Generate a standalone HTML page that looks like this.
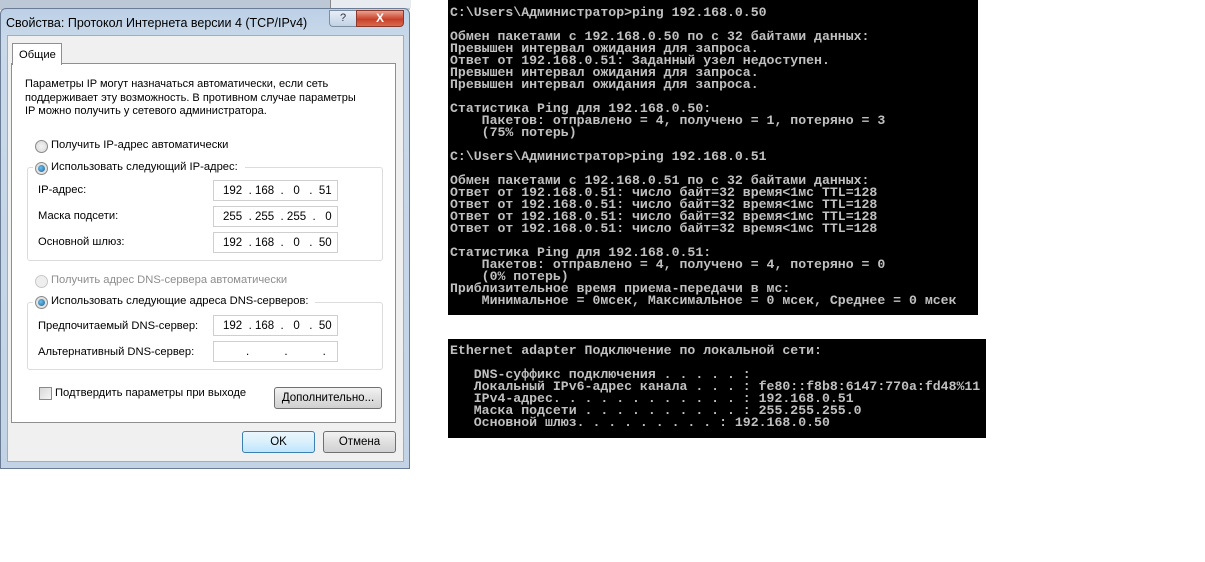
<!DOCTYPE html>
<html><head><meta charset="utf-8"><style>
body{margin:0;width:1205px;height:562px;background:#fff;position:relative;overflow:hidden;font-family:"Liberation Sans",sans-serif;}
.a{position:absolute}
.t{font-size:11.2px;color:#000;white-space:nowrap}
.con{position:absolute;background:#000;color:#c0c0c0;font-family:"Liberation Mono",monospace;font-weight:bold;font-size:13.2px;line-height:12px;white-space:pre;letter-spacing:0}
.inp{position:absolute;left:213px;width:123px;height:19px;background:#fff;border:1px solid #cfcfcf;font-size:11.5px;line-height:19px}
.inp span{position:absolute;top:1px}
.rad{position:absolute;width:11px;height:11px;border-radius:50%;border:1px solid #8a8a8a;background:radial-gradient(#f4f4f4,#d6d6d6)}
.rad.on::after{content:"";position:absolute;left:2px;top:2px;width:7px;height:7px;border-radius:50%;background:radial-gradient(circle at 40% 40%,#6ac2f0,#1a5d93)}
.btn{position:absolute;height:20px;border:1px solid #707070;border-radius:3px;background:linear-gradient(#f2f2f2,#e0e0e0 50%,#d0d0d0);font-size:11.5px;text-align:center;line-height:20px}
.grp{position:absolute;border:1px solid #dcdcdc;border-radius:3px}
</style></head><body>
<div class="a" style="left:0;top:0;width:410px;height:10px;background:#bcc8d6"></div>
<div class="a" style="left:330px;top:0;width:80px;height:8px;background:#e8ecf0;border-left:1px solid #888"></div>
<div class="a" style="left:0;top:8px;width:408px;height:459px;background:linear-gradient(#bcd0e6,#c9d9ea 30px,#c2d3e6);border:1px solid #6a7d94;border-radius:6px 6px 0 0"></div>
<div class="a t" style="left:6px;top:16px;font-size:12.5px">Свойства: Протокол Интернета версии 4 (TCP/IPv4)</div>
<div class="a" style="left:329px;top:10px;width:26px;height:15px;border:1px solid #7d8ea3;border-radius:0 0 0 4px;background:linear-gradient(#e6eef7,#c3d2e4);font-size:11px;text-align:center;line-height:15px;color:#334">?</div>
<div class="a" style="left:356px;top:10px;width:46px;height:15px;border:1px solid #8a3a2c;border-radius:0 0 4px 0;background:linear-gradient(#e8a18f,#c8412a 55%,#d86a4c);color:#fff;font-weight:bold;font-size:12px;text-align:center;line-height:15px">X</div>
<div class="a" style="left:7px;top:35px;width:395px;height:425px;background:#f0f0f0;border:1px solid #a0adbd"></div>
<div class="a" style="left:11px;top:63px;width:383px;height:358px;background:#fff;border:1px solid #8e8f8f"></div>
<div class="a" style="left:12px;top:43px;width:48px;height:21px;background:#fff;border:1px solid #8e8f8f;border-bottom:none"></div>
<div class="a t" style="left:19px;top:49px">Общие</div>
<div class="a t" style="left:25px;top:78px;line-height:13.5px;font-size:11px">Параметры IP могут назначаться автоматически, если сеть<br>поддерживает эту возможность. В противном случае параметры<br>IP можно получить у сетевого администратора.</div>
<div class="rad" style="left:35px;top:140px"></div>
<div class="a t" style="left:51px;top:139px">Получить IP-адрес автоматически</div>
<div class="grp" style="left:27px;top:167px;width:354px;height:92px"></div>
<div class="a" style="left:33px;top:160px;width:212px;height:14px;background:#fff"></div>
<div class="rad on" style="left:35px;top:162px"></div>
<div class="a t" style="left:51px;top:161px">Использовать следующий IP-адрес:</div>
<div class="a t" style="left:38px;top:184px">IP-адрес:</div>
<div class="a t" style="left:38px;top:210px">Маска подсети:</div>
<div class="a t" style="left:38px;top:236px">Основной шлюз:</div>
<div class="inp" style="top:180px"><span style="left:9px">192&nbsp; .&nbsp;168&nbsp; .&nbsp;&nbsp; 0&nbsp;&nbsp; .&nbsp; 51</span></div>
<div class="inp" style="top:206px"><span style="left:9px">255&nbsp; .&nbsp;255&nbsp; .&nbsp;255&nbsp; .&nbsp;&nbsp; 0</span></div>
<div class="inp" style="top:232px"><span style="left:9px">192&nbsp; .&nbsp;168&nbsp; .&nbsp;&nbsp; 0&nbsp;&nbsp; .&nbsp; 50</span></div>
<div class="rad" style="left:35px;top:275px;border-color:#c8c8c8;background:#eee"></div>
<div class="a t" style="left:51px;top:274px;color:#8d8d8d">Получить адрес DNS-сервера автоматически</div>
<div class="grp" style="left:27px;top:302px;width:354px;height:66px"></div>
<div class="a" style="left:33px;top:294px;width:282px;height:14px;background:#fff"></div>
<div class="rad on" style="left:35px;top:296px"></div>
<div class="a t" style="left:51px;top:295px">Использовать следующие адреса DNS-серверов:</div>
<div class="a t" style="left:38px;top:320px">Предпочитаемый DNS-сервер:</div>
<div class="a t" style="left:38px;top:346px">Альтернативный DNS-сервер:</div>
<div class="inp" style="top:315px"><span style="left:9px">192&nbsp; .&nbsp;168&nbsp; .&nbsp;&nbsp; 0&nbsp;&nbsp; .&nbsp; 50</span></div>
<div class="inp" style="top:341px"><span style="left:32px">.&nbsp;&nbsp;&nbsp;&nbsp;&nbsp;&nbsp;&nbsp;&nbsp;&nbsp;&nbsp; .&nbsp;&nbsp;&nbsp;&nbsp;&nbsp;&nbsp;&nbsp;&nbsp;&nbsp;&nbsp; .</span></div>
<div class="a" style="left:39px;top:387px;width:11px;height:11px;border:1px solid #8a8a8a;background:linear-gradient(135deg,#d8d8d8,#f6f6f6)"></div>
<div class="a t" style="left:55px;top:387px">Подтвердить параметры при выходе</div>
<div class="btn" style="left:274px;top:387px;width:106px">Дополнительно...</div>
<div class="btn" style="left:242px;top:431px;width:71px;border-color:#3c7fb1;background:linear-gradient(#eaf6fd,#d9f0fc 50%,#bee6fd)">OK</div>
<div class="btn" style="left:323px;top:431px;width:71px">Отмена</div>

<div class="con" style="left:448px;top:0;width:530px;height:315px;padding:0"><div style="position:absolute;left:2px;top:7px">C:\Users\Администратор&gt;ping 192.168.0.50

Обмен пакетами с 192.168.0.50 по с 32 байтами данных:
Превышен интервал ожидания для запроса.
Ответ от 192.168.0.51: Заданный узел недоступен.
Превышен интервал ожидания для запроса.
Превышен интервал ожидания для запроса.

Статистика Ping для 192.168.0.50:
    Пакетов: отправлено = 4, получено = 1, потеряно = 3
    (75% потерь)

C:\Users\Администратор&gt;ping 192.168.0.51

Обмен пакетами с 192.168.0.51 по с 32 байтами данных:
Ответ от 192.168.0.51: число байт=32 время&lt;1мс TTL=128
Ответ от 192.168.0.51: число байт=32 время&lt;1мс TTL=128
Ответ от 192.168.0.51: число байт=32 время&lt;1мс TTL=128
Ответ от 192.168.0.51: число байт=32 время&lt;1мс TTL=128

Статистика Ping для 192.168.0.51:
    Пакетов: отправлено = 4, получено = 4, потеряно = 0
    (0% потерь)
Приблизительное время приема-передачи в мс:
    Минимальное = 0мсек, Максимальное = 0 мсек, Среднее = 0 мсек</div></div>
<div class="con" style="left:448px;top:339px;width:538px;height:99px"><div style="position:absolute;left:2px;top:6px">Ethernet adapter Подключение по локальной сети:

   DNS-суффикс подключения . . . . . :
   Локальный IPv6-адрес канала . . . : fe80::f8b8:6147:770a:fd48%11
   IPv4-адрес. . . . . . . . . . . . : 192.168.0.51
   Маска подсети . . . . . . . . . . : 255.255.255.0
   Основной шлюз. . . . . . . . . : 192.168.0.50</div></div>
</body></html>
